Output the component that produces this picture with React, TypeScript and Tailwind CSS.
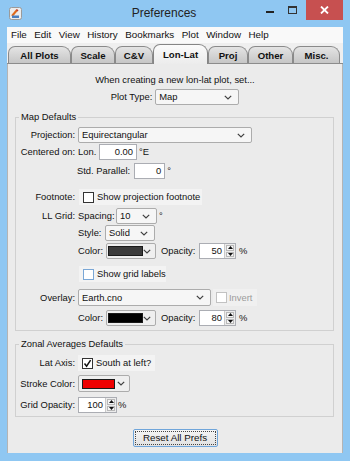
import React from "react";

type BoxProps = { className?: string; children?: React.ReactNode };

const Chevron = () => (
  <svg width="8" height="5" viewBox="0 0 8 5" className="shrink-0">
    <path d="M0.8 0.8 L4 4 L7.2 0.8" fill="none" stroke="#404040" strokeWidth="1.2" />
  </svg>
);

// plain combo box with text + arrow
const Combo = ({ className = "", children }: BoxProps) => (
  <div
    className={`flex h-[16px] items-center justify-between rounded-[2px] border border-[#acacac] bg-[#f6f6f6] pl-[3px] pr-[6px] ${className}`}
  >
    <span>{children}</span>
    <Chevron />
  </div>
);

const ColorCombo = ({ className = "", swatch }: { className?: string; swatch: string }) => (
  <div
    className={`flex h-[16px] items-center justify-between rounded-[2px] border border-[#acacac] bg-[#efefef] pl-[1px] pr-[4px] ${className}`}
  >
    <div className={`h-[10px] border border-[#1a1a1a] ${swatch}`} />
    <Chevron />
  </div>
);

const Field = ({ className = "", children }: BoxProps) => (
  <div
    className={`flex h-[16px] items-center justify-end border border-[#abadb3] bg-white pr-[3px] ${className}`}
  >
    {children}
  </div>
);

const Spinner = ({ className = "", value }: { className?: string; value: string }) => (
  <div className={`flex h-[16px] border border-[#abadb3] bg-white ${className}`}>
    <div className="flex flex-1 items-center justify-end pr-[2px]">{value}</div>
    <div className="flex w-[11px] flex-col gap-px border-l border-[#c9c9c9] bg-[#ececec] p-px">
      <div className="flex flex-1 items-center justify-center border border-[#b8b8b8] bg-[#f5f5f5]">
        <svg width="5" height="3" viewBox="0 0 5 3">
          <path d="M0 3 L2.5 0 L5 3Z" fill="#111" />
        </svg>
      </div>
      <div className="flex flex-1 items-center justify-center border border-[#b8b8b8] bg-[#f5f5f5]">
        <svg width="5" height="3" viewBox="0 0 5 3">
          <path d="M0 0 L2.5 3 L5 0Z" fill="#111" />
        </svg>
      </div>
    </div>
  </div>
);

const CheckBox = ({ checked = false, className = "" }: { checked?: boolean; className?: string }) => (
  <div className={`flex h-[11px] w-[11px] shrink-0 items-center justify-center border bg-white ${className}`}>
    {checked && (
      <svg width="9" height="9" viewBox="0 0 9 9">
        <path d="M1.5 4.5 L3.6 7.2 L7.6 1.2" fill="none" stroke="#111" strokeWidth="1.5" />
      </svg>
    )}
  </div>
);

const Label = ({ children }: BoxProps) => (
  <div className="w-[59px] shrink-0 whitespace-nowrap text-right">{children}</div>
);

const tabs = [
  { name: "All Plots", w: "w-[63px]" },
  { name: "Scale", w: "w-[44px]" },
  { name: "C&V", w: "w-[38px]" },
  { name: "Lon-Lat", w: "w-[55px]", active: true },
  { name: "Proj", w: "w-[40px]" },
  { name: "Other", w: "w-[45px]" },
  { name: "Misc.", w: "w-[47px]" },
];

const menus = ["File", "Edit", "View", "History", "Bookmarks", "Plot", "Window", "Help"];

export default function App() {
  return (
    <div className="flex h-[461px] w-[350px] flex-col overflow-hidden bg-[#8fc7f2] font-['Liberation_Sans',Arial,sans-serif] text-[9.4px] leading-[12px] text-[#111]">
      {/* title bar */}
      <div className="flex h-[27px] shrink-0 items-start">
        <div className="ml-[9px] mt-[7px] w-[60px]">
          <svg width="13" height="13" viewBox="0 0 13 13">
            <rect x="0.5" y="0.5" width="12" height="12" rx="2" fill="#ececec" stroke="#9a9a9a" />
            <path d="M3 9 L8 3" stroke="#e06a1c" strokeWidth="2" />
            <path d="M7.5 2.5 L9 4" stroke="#c0392b" strokeWidth="1.4" />
            <rect x="3" y="8.5" width="7" height="2.5" fill="#4a7fc0" />
          </svg>
        </div>
        <div className="flex-1 pt-[5px] text-center text-[12px] leading-[16px] text-[#222]">Preferences</div>
        <div className="flex items-start">
          <div className="flex h-[20px] w-[22px] items-center justify-center">
            <div className="mt-[3px] h-[2px] w-[8px] bg-[#222]" />
          </div>
          <div className="flex h-[20px] w-[22px] items-center justify-center">
            <div className="h-[8px] w-[9px] border border-t-2 border-[#333]" />
          </div>
          <div className="ml-[3px] flex h-[20px] w-[37px] items-center justify-center bg-[#c75050]">
            <svg width="9" height="8" viewBox="0 0 9 8">
              <path d="M1 0.5 L8 7.5 M8 0.5 L1 7.5" stroke="#fff" strokeWidth="1.8" />
            </svg>
          </div>
          <div className="w-[7px]" />
        </div>
      </div>

      <div className="mx-[7px] flex flex-1 flex-col">
        {/* menu bar */}
        <div className="flex h-[16px] shrink-0 items-center gap-[7.5px] bg-[#f9f9f9] pl-[4px] text-[9.8px]">
          {menus.map((m) => (
            <span key={m}>{m}</span>
          ))}
        </div>

        {/* tabs */}
        <div className="flex h-[21px] shrink-0 items-end border-b border-[#8c8c8c] bg-[#efefef] pl-px">
          {tabs.map((t) =>
            t.active ? (
              <div
                key={t.name}
                className={`relative -mb-px flex h-[20px] items-center justify-center rounded-tl-[7px] rounded-tr-[9px] border border-b-0 border-[#858585] bg-gradient-to-b from-[#fbfbfb] to-[#ececec] text-[9.6px] font-bold ${t.w}`}
              >
                {t.name}
              </div>
            ) : (
              <div
                key={t.name}
                className={`flex h-[17px] items-center justify-center rounded-tl-[7px] rounded-tr-[9px] border border-b-0 border-[#8a8a8a] bg-gradient-to-b from-[#e4e4e4] to-[#c6c6c6] pt-px text-[9.6px] font-bold ${t.w}`}
              >
                {t.name}
              </div>
            )
          )}
        </div>

        {/* panel */}
        <div className="flex flex-1 flex-col border-x border-[#b4b4b4] bg-[#ebebeb] pt-[9px]">
          <div className="h-[14px] text-center leading-[14px]">When creating a new lon-lat plot, set...</div>
          <div className="mt-[2px] flex items-center justify-center gap-[3px]">
            <span>Plot Type:</span>
            <Combo className="w-[84px]">Map</Combo>
          </div>

          <fieldset className="ml-[7px] mr-[8px] mt-[6px] border border-[#d0d0d0] pb-[4px]">
            <legend className="ml-[3px] px-[2px] leading-[12px]">Map Defaults</legend>
            <div className="mt-[4px] flex flex-col">
              <div className="flex h-[16px] items-center gap-[3px]">
                <Label>Projection:</Label>
                <Combo className="w-[174px]">Equirectangular</Combo>
              </div>

              <div className="mt-px flex h-[16px] items-center">
                <Label>Centered on:</Label>
                <span className="ml-[3px] w-[21px]">Lon.</span>
                <Field className="w-[38px]">0.00</Field>
                <span className="ml-[2px]">°E</span>
              </div>

              <div className="mt-[3px] flex h-[16px] items-center">
                <div className="w-[59px]" />
                <span className="ml-[2px] whitespace-nowrap">Std. Parallel:</span>
                <Field className="ml-[4px] w-[31px]">0</Field>
                <span className="ml-[2px]">°</span>
              </div>

              <div className="mt-[10px] flex h-[16px] items-center">
                <Label>Footnote:</Label>
                <div className="ml-[4px] flex h-[16px] w-[123px] items-center bg-[#f3f3f3] pl-[4px]">
                  <CheckBox className="border-[#333]" />
                  <span className="ml-[3px] whitespace-nowrap">Show projection footnote</span>
                </div>
              </div>

              <div className="mt-[3px] flex h-[16px] items-center">
                <Label>LL Grid:</Label>
                <span className="ml-[3px] w-[38px]">Spacing:</span>
                <Combo className="w-[41px]">10</Combo>
                <span className="ml-[2px]">°</span>
              </div>

              <div className="mt-px flex h-[16px] items-center">
                <div className="w-[59px]" />
                <span className="ml-[3px] w-[27px]">Style:</span>
                <Combo className="w-[50px]">Solid</Combo>
              </div>

              <div className="mt-[2px] flex h-[16px] items-center">
                <div className="w-[59px]" />
                <span className="ml-[3px] w-[28px]">Color:</span>
                <ColorCombo className="w-[50px]" swatch="w-[36px] bg-[#3b3b3b]" />
                <span className="ml-[5px] w-[38px]">Opacity:</span>
                <Spinner className="w-[37px]" value="50" />
                <span className="ml-[3px]">%</span>
              </div>

              <div className="mt-[7px] flex h-[16px] items-center">
                <div className="w-[59px]" />
                <div className="ml-[4px] flex h-[16px] w-[87px] items-center bg-[#f3f3f3] pl-[4px]">
                  <CheckBox className="border-[#7aa7d6]" />
                  <span className="ml-[3px] whitespace-nowrap">Show grid labels</span>
                </div>
              </div>

              <div className="mt-[7px] flex h-[17px] items-center">
                <Label>Overlay:</Label>
                <Combo className="ml-[3px] h-[17px] w-[133px]">Earth.cno</Combo>
                <div className="ml-[2px] flex h-[17px] w-[44px] items-center bg-[#f0f0f0] pl-[3px]">
                  <CheckBox className="border-[#c2c2c2] bg-[#f4f4f4]" />
                  <span className="ml-[2px] text-[#9b9b9b]">Invert</span>
                </div>
              </div>

              <div className="mt-[4px] flex h-[16px] items-center">
                <div className="w-[59px]" />
                <span className="ml-[3px] w-[28px]">Color:</span>
                <ColorCombo className="w-[50px]" swatch="w-[36px] bg-[#000]" />
                <span className="ml-[5px] w-[38px]">Opacity:</span>
                <Spinner className="w-[37px]" value="80" />
                <span className="ml-[3px]">%</span>
              </div>
            </div>
          </fieldset>

          <fieldset className="ml-[7px] mr-[8px] mt-[7px] border border-[#d0d0d0] pb-[3px]">
            <legend className="ml-[3px] px-[2px] leading-[12px]">Zonal Averages Defaults</legend>
            <div className="mt-[5px] flex flex-col">
              <div className="flex h-[16px] items-center">
                <Label>Lat Axis:</Label>
                <div className="ml-[3px] flex h-[16px] w-[77px] items-center bg-[#f3f3f3] pl-[4px]">
                  <CheckBox checked className="border-[#333]" />
                  <span className="ml-[3px] whitespace-nowrap">South at left?</span>
                </div>
              </div>

              <div className="mt-[4px] flex h-[17px] items-center gap-[3px]">
                <Label>Stroke Color:</Label>
                <ColorCombo className="h-[17px] w-[52px] pl-[3px]" swatch="w-[33px] bg-[#ee0000]" />
              </div>

              <div className="mt-[5px] flex h-[16px] items-center">
                <Label>Grid Opacity:</Label>
                <Spinner className="ml-[3px] w-[39px]" value="100" />
                <span className="ml-px">%</span>
              </div>
            </div>
          </fieldset>

          <div className="mt-[12px] flex justify-center">
            <div className="flex h-[18px] w-[85px] rounded-[2px] border border-[#6fa5da] bg-gradient-to-b from-[#f5f5f5] to-[#e1e1e1] p-px">
              <div className="flex flex-1 items-center justify-center border border-dotted border-[#444] text-[9.8px]">
                Reset All Prefs
              </div>
            </div>
          </div>
        </div>
        <div className="h-[8px] shrink-0" />
      </div>
    </div>
  );
}
